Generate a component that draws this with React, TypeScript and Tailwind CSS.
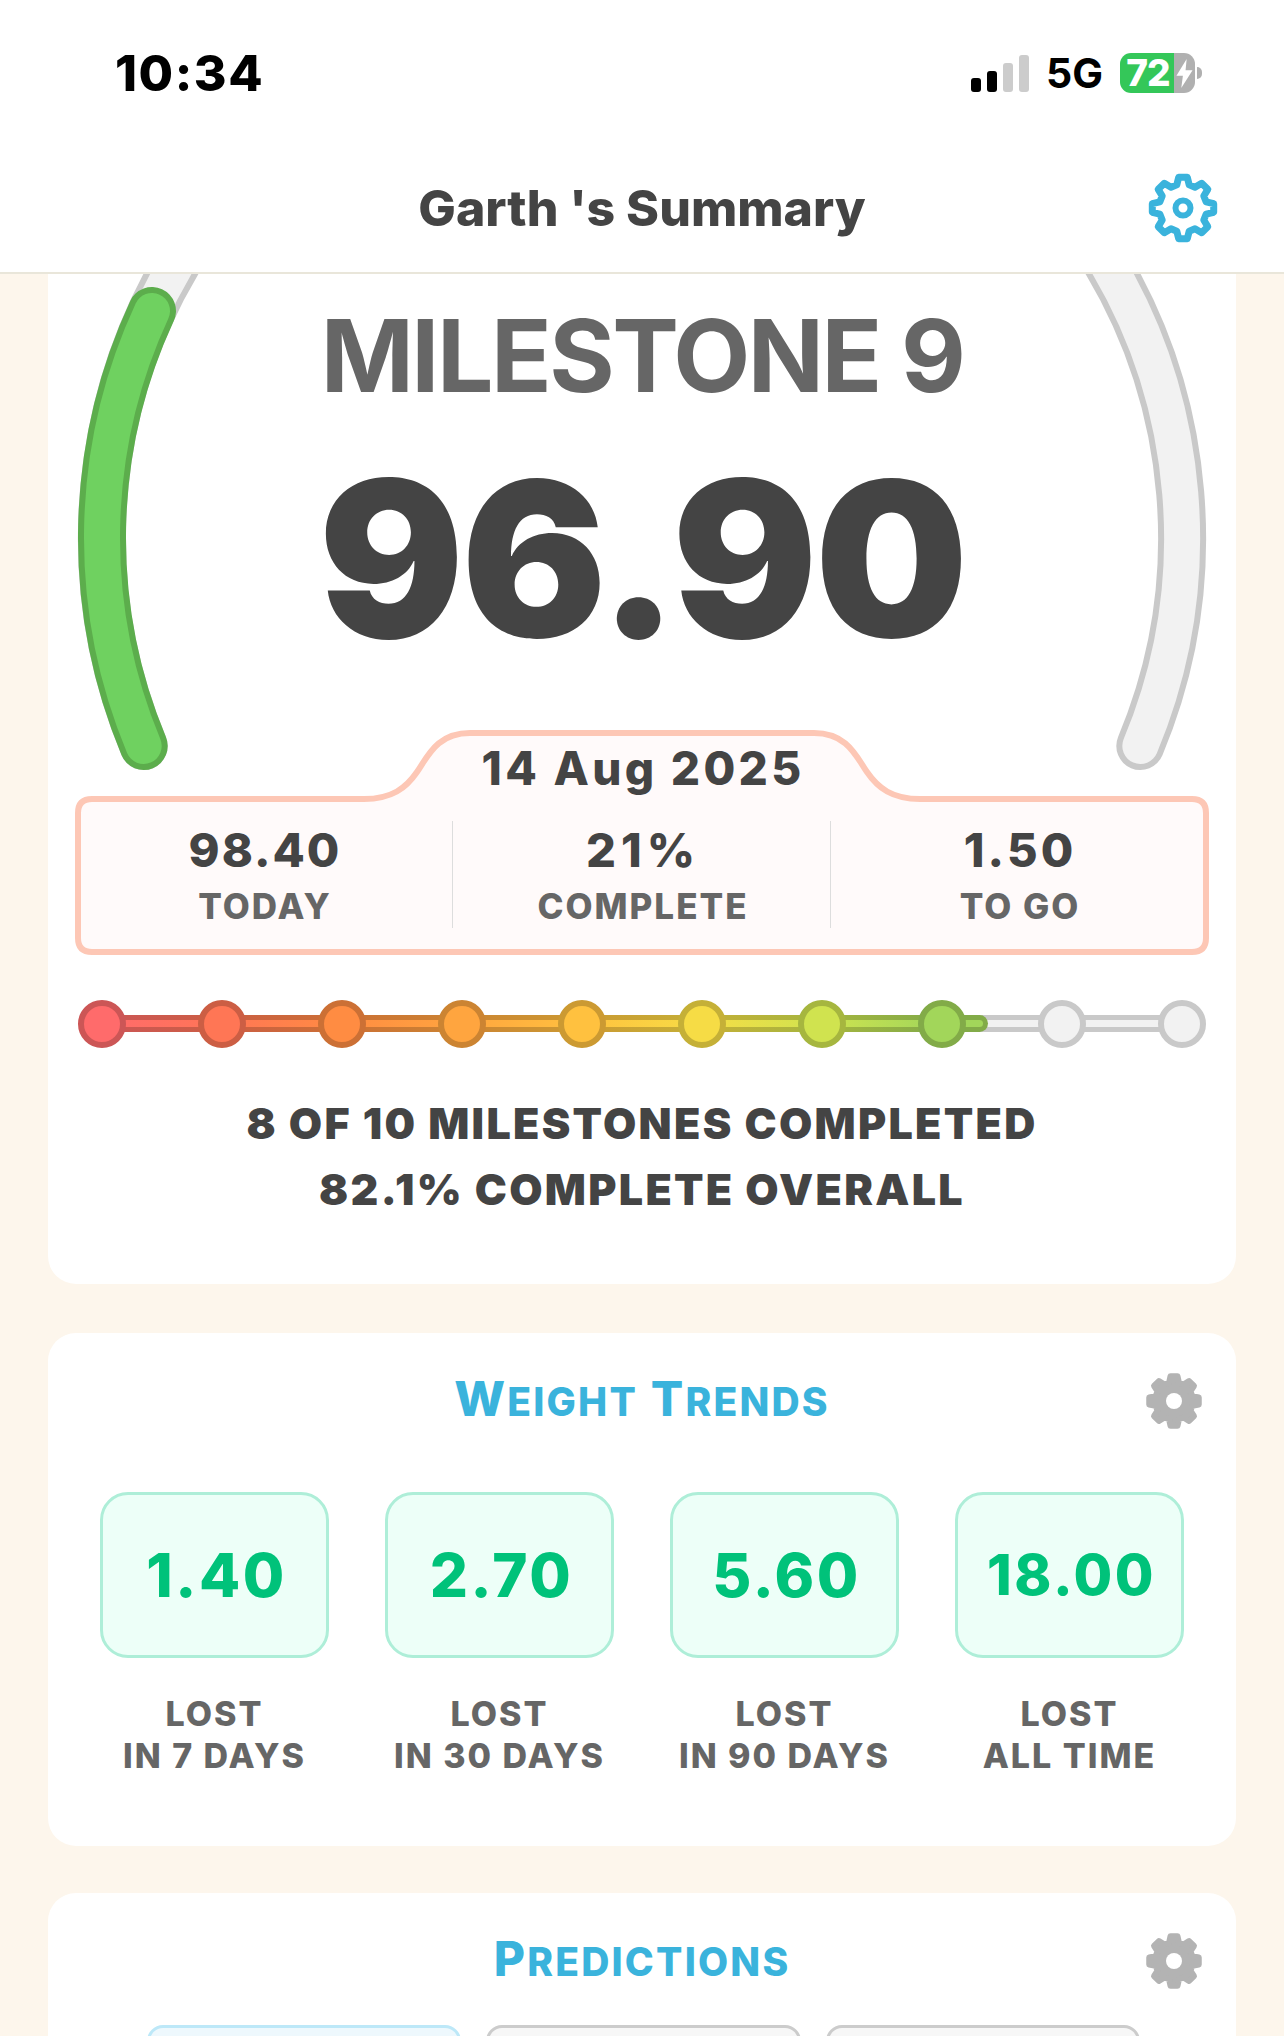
function gearPath(rOuter: number, rRoot: number) {
  const pts: string[] = [];
  for (let i = 0; i < 8; i++) {
    const a = i * 45 - 90;
    for (const [d, r] of [
      [-15, rRoot],
      [-8, rOuter],
      [8, rOuter],
      [15, rRoot],
    ]) {
      const t = ((a + d) * Math.PI) / 180;
      pts.push(`${(r * Math.cos(t)).toFixed(2)} ${(r * Math.sin(t)).toFixed(2)}`);
    }
  }
  return `M${pts.join('L')}Z`;
}

function BlueGear() {
  return (
    <svg viewBox="-36 -36 72 72" className="absolute right-[65px] top-[-6px] h-[72px] w-[72px]">
      <path
        d={gearPath(31, 24)}
        fill="none"
        stroke="#3ab3dc"
        strokeWidth="7"
        strokeLinejoin="round"
      />
      <circle r="7.5" fill="none" stroke="#3ab3dc" strokeWidth="6" />
    </svg>
  );
}

function GrayGear() {
  return (
    <svg viewBox="-30 -30 60 60" className="absolute right-[32px] top-0 h-[60px] w-[60px]">
      <path
        d={gearPath(25, 19)}
        fill="#b3b3b3"
        stroke="#b3b3b3"
        strokeWidth="6"
        strokeLinejoin="round"
      />
      <circle r="8" fill="#ffffff" />
    </svg>
  );
}

function StatusBar() {
  return (
    <div className="mt-[48px] flex h-[50px] items-center justify-between pl-[115px] pr-[82px]">
      <span className="text-[50px] font-extrabold leading-[50px] tracking-[1.5px] text-black">10:34</span>
      <div className="flex items-center">
        <div className="flex h-[37px] items-end gap-[6px]">
          <div className="h-[14px] w-[10px] rounded-[3px] bg-black" />
          <div className="h-[21px] w-[10px] rounded-[3px] bg-black" />
          <div className="h-[29px] w-[10px] rounded-[3px] bg-[#cccccc]" />
          <div className="h-[37px] w-[10px] rounded-[3px] bg-[#cccccc]" />
        </div>
        <span className="ml-[17px] text-[41px] font-bold leading-[41px] text-black">5G</span>
        <div className="ml-[17px] flex h-[40px] w-[75px]">
          <div className="flex w-[54px] items-center justify-center rounded-l-[11px] bg-[#34c759] pl-[2px]">
            <span className="text-[37px] font-extrabold leading-[40px] tracking-[-1px] text-white">72</span>
          </div>
          <div className="flex flex-1 items-center justify-center rounded-r-[11px] bg-[#b0b0b0]">
            <svg viewBox="0 0 15 27" className="h-[29px] w-[17px]">
              <path d="M9.5 0 L0 15.5 H6 L4.5 27 L15 10.5 H8.5 Z" fill="#ffffff" />
            </svg>
          </div>
        </div>
        <div className="ml-[2px] h-[12px] w-[5px] rounded-r-full bg-[#b0b0b0]" />
      </div>
    </div>
  );
}

const nodes = [
  'border-[#cc5656] bg-[#ff6b6b]',
  'border-[#cc5e44] bg-[#ff7655]',
  'border-[#cc7035] bg-[#ff8c42]',
  'border-[#cc8432] bg-[#ffa53f]',
  'border-[#cc9a32] bg-[#ffc13f]',
  'border-[#c5b037] bg-[#f6dc45]',
  'border-[#a6b63f] bg-[#d0e34f]',
  'border-[#82ab48] bg-[#a2d65a]',
  'border-[#c9c9c9] bg-[#f2f2f2]',
  'border-[#c9c9c9] bg-[#f2f2f2]',
];

function MilestoneTrack() {
  return (
    <div className="relative mx-[3px] mt-[45px] h-[48px]">
      <div className="absolute left-[24px] right-[24px] top-[15px] h-[17px] rounded-full bg-[#c9c9c9] p-[5px]">
        <div className="h-full bg-[#f2f2f2]" />
      </div>
      <div className="absolute left-[24px] top-[15px] h-[17px] w-[886px] rounded-full bg-[linear-gradient(90deg,#cc5656_0%,#cc5e44_13.5%,#cc7035_27.1%,#cc8432_40.6%,#cc9a32_54.2%,#c5b037_67.7%,#a6b63f_81.3%,#82ab48_94.8%)] p-[5px]">
        <div className="h-full rounded-full bg-[linear-gradient(90deg,#ff6b6b_0%,#ff7655_13.5%,#ff8c42_27.1%,#ffa53f_40.6%,#ffc13f_54.2%,#f6dc45_67.7%,#d0e34f_81.3%,#a2d65a_94.8%)]" />
      </div>
      <div className="relative flex justify-between">
        {nodes.map((cls, i) => (
          <div key={i} className={`h-[48px] w-[48px] rounded-full border-[6px] ${cls}`} />
        ))}
      </div>
    </div>
  );
}

function Stat({ value, label, divider, tracking }: { value: string; label: string; divider?: boolean; tracking: string }) {
  return (
    <div className={`h-[107px] pt-[5px] text-center ${divider ? 'border-r border-[#dddddd] pl-[3px]' : ''}`}>
      <div className={`text-[47px] font-extrabold leading-[48px] text-[#444444] ${tracking}`}>{value}</div>
      <div className="mt-[14px] text-[35px] font-extrabold leading-[36px] tracking-[2px] text-[#666666]">{label}</div>
    </div>
  );
}

function SummaryBox() {
  return (
    <div className="relative mt-[63px] h-[225px]">
      <svg viewBox="0 0 1134 225" className="absolute inset-0 h-[225px] w-[1134px]">
        <path
          d="M17 69 H289 C317 69 331 58 342 42 C353 26 362 3 395 3 H739 C772 3 781 26 792 42 C803 58 817 69 845 69 H1117 Q1131 69 1131 83 V208 Q1131 222 1117 222 H17 Q3 222 3 208 V83 Q3 69 17 69 Z"
          fill="#fffafa"
          stroke="#fdc7b5"
          strokeWidth="6"
        />
      </svg>
      <div className="relative pl-[2px] pt-[14px]">
        <div className="text-center text-[46px] font-extrabold leading-[48px] tracking-[3.3px] text-[#444444]">14 Aug 2025</div>
        <div className="mt-[29px] -ml-[2px] grid grid-cols-3">
          <Stat value="98.40" label="TODAY" divider tracking="tracking-[2px]" />
          <Stat value="21%" label="COMPLETE" divider tracking="tracking-[5px]" />
          <Stat value="1.50" label="TO GO" tracking="tracking-[3px]" />
        </div>
      </div>
    </div>
  );
}

function Gauge() {
  return (
    <svg viewBox="48 274 1188 520" className="absolute left-0 top-0 h-[520px] w-[1188px]">
      <g fill="none" strokeLinecap="round">
        <path d="M143.7 746 A540 540 0 0 1 185 250" stroke="#c9c9c9" strokeWidth="48" />
        <path d="M143.7 746 A540 540 0 0 1 185 250" stroke="#f2f2f2" strokeWidth="36" />
        <path d="M1140.3 746 A540 540 0 0 0 1099 250" stroke="#c9c9c9" strokeWidth="48" />
        <path d="M1140.3 746 A540 540 0 0 0 1099 250" stroke="#f2f2f2" strokeWidth="36" />
        <path d="M143.7 746 A540 540 0 0 1 152 311" stroke="#5cad4c" strokeWidth="48" />
        <path d="M143.7 746 A540 540 0 0 1 152 311" stroke="#6fd160" strokeWidth="36" />
      </g>
    </svg>
  );
}

function SectionTitle({ first, rest, second, secondRest }: { first: string; rest: string; second?: string; secondRest?: string }) {
  return (
    <div className="relative flex h-[56px] justify-center">
      <h2 className="text-[48px] font-extrabold uppercase leading-[56px] tracking-[2.2px] text-[#3ab3dc]">
        {first}
        <span className="text-[39px]">{rest}</span>
        {second && ' ' + second}
        {secondRest && <span className="text-[39px]">{secondRest}</span>}
      </h2>
      <GrayGear />
    </div>
  );
}

const trends = [
  { value: '1.40', size: 'text-[60px]', line1: 'LOST', line2: 'IN 7 DAYS' },
  { value: '2.70', size: 'text-[60px]', line1: 'LOST', line2: 'IN 30 DAYS' },
  { value: '5.60', size: 'text-[60px]', line1: 'LOST', line2: 'IN 90 DAYS' },
  { value: '18.00', size: 'text-[56px]', line1: 'LOST', line2: 'ALL TIME' },
];

export default function App() {
  return (
    <div className="relative flex h-[2036px] w-[1284px] flex-col overflow-hidden bg-[#fdf6ec] font-['Inter',sans-serif]">
      <header className="h-[274px] shrink-0 border-b-2 border-[#e9e6da] bg-white">
        <StatusBar />
        <div className="relative mt-[80px] flex h-[60px] justify-center">
          <h1 className="text-[50px] font-extrabold leading-[60px] text-[#444444]">Garth 's Summary</h1>
          <BlueGear />
        </div>
      </header>

      <main className="px-[48px]">
        <section className="relative h-[1010px] rounded-b-[28px] bg-white px-[27px] pt-[32px]">
          <Gauge />
          <div className="relative">
            <div className="text-center text-[100px] font-bold leading-[100px] tracking-[-2.5px] text-[#666666]">MILESTONE 9</div>
            <div className="mt-[45px] text-center text-[216px] font-black leading-[216px] tracking-[-3px] text-[#444444]">96.90</div>
            <SummaryBox />
            <MilestoneTrack />
            <div className="mt-[42px] text-center text-[43px] font-black leading-[66px] tracking-[2.3px] text-[#444444]">
              <div>8 OF 10 MILESTONES COMPLETED</div>
              <div>82.1% COMPLETE OVERALL</div>
            </div>
          </div>
        </section>

        <section className="mt-[49px] h-[513px] rounded-[28px] bg-white pt-[38px]">
          <SectionTitle first="W" rest="eight" second="T" secondRest="rends" />
          <div className="mt-[65px] grid grid-cols-4 gap-[56px] px-[52px]">
            {trends.map((t) => (
              <div key={t.line2}>
                <div className="flex h-[166px] items-center justify-center rounded-[28px] border-[3px] border-[#aeeed8] bg-[#edfff8] pl-[4px]">
                  <span className={`${t.size} font-extrabold tracking-[2.5px] text-[#00c27a]`}>{t.value}</span>
                </div>
                <div className="mt-[35px] text-center text-[34px] font-extrabold leading-[42px] tracking-[2px] text-[#666666]">
                  <div>{t.line1}</div>
                  <div>{t.line2}</div>
                </div>
              </div>
            ))}
          </div>
        </section>

        <section className="mt-[47px] rounded-[28px] bg-white pb-[40px] pt-[38px]">
          <SectionTitle first="P" rest="redictions" />
          <div className="mt-[38px] grid grid-cols-3 gap-[25px] pl-[99px] pr-[96px]">
            <div className="h-[166px] rounded-[16px] border-[3px] border-[#bde8f8] bg-[#eef8fd]" />
            <div className="h-[166px] rounded-[16px] border-[3px] border-[#cccccc] bg-[#f7f7f7]" />
            <div className="h-[166px] rounded-[16px] border-[3px] border-[#cccccc] bg-[#f7f7f7]" />
          </div>
        </section>
      </main>
    </div>
  );
}
